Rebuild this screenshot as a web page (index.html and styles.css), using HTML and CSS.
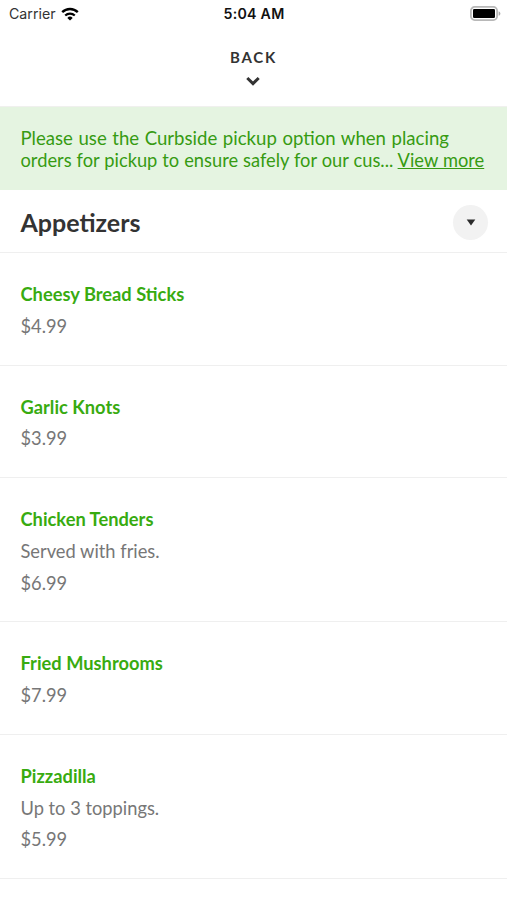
FILE: index.html
```
<!DOCTYPE html>
<html lang="en">
<head>
    <meta charset="UTF-8" />
    <meta name="viewport" content="width=device-width, initial-scale=1.0"/>
    <title>Appetizers | Menu</title>
    <link rel="stylesheet" href="styles.css">
</head>
<body>
<div class="status-bar">
    <div class="carrier">
        <span>Carrier</span>
        <svg class="wifi" viewBox="0 0 18 14" width="18" height="14">
            <path d="M1.2 5.2a11.2 11.2 0 0 1 15.6 0" fill="none" stroke="#000" stroke-width="2.4"/>
            <path d="M4.2 8.5a7 7 0 0 1 9.6 0" fill="none" stroke="#000" stroke-width="2.2"/>
            <path d="M9 13.6L6.3 10.9a3.9 3.9 0 0 1 5.4 0z" fill="#000"/>
        </svg>
    </div>
    <div class="time">5:04 AM</div>
    <svg class="battery" viewBox="0 0 31 15" width="31" height="15">
        <rect x=".9" y=".9" width="26.2" height="13.2" rx="3.8" fill="#fff" stroke="#b8b8b8" stroke-width="1.8"/>
        <rect x="3" y="3" width="22" height="9" rx="1.2" fill="#000"/>
        <path d="M28.6 5.2c2.4 1 2.4 3.6 0 4.6z" fill="#aaa"/>
    </svg>
</div>

<header class="nav">
    <a href="#" class="back">Back</a>
    <svg class="chevron" viewBox="0 0 14 10" width="14" height="10">
        <path d="M1.3 2L7 7.6 12.7 2" fill="none" stroke="#333" stroke-width="3"/>
    </svg>
</header>

<div class="notice">
    <p class="lead">Please use the Curbside pickup option when placing</p>
    <p>orders for pickup to ensure safely for our cus... <a href="#">View more</a></p>
</div>

<div class="category">
    <h1>Appetizers</h1>
    <button class="toggle" aria-label="Choose category">
        <svg viewBox="0 0 10 7" width="10" height="7"><path d="M.7.5h8.6L5 6.5z" fill="#2b2b2b"/></svg>
    </button>
</div>

<ul class="menu">
    <li class="item">
        <h2>Cheesy Bread Sticks</h2>
        <p>$4.99</p>
    </li>
    <li class="item">
        <h2>Garlic Knots</h2>
        <p>$3.99</p>
    </li>
    <li class="item">
        <h2>Chicken Tenders</h2>
        <p>Served with fries.</p>
        <p>$6.99</p>
    </li>
    <li class="item">
        <h2>Fried Mushrooms</h2>
        <p>$7.99</p>
    </li>
    <li class="item">
        <h2>Pizzadilla</h2>
        <p>Up to 3 toppings.</p>
        <p>$5.99</p>
    </li>
</ul>
</body>
</html>
```
FILE: styles.css
```
* {
    margin: 0;
    padding: 0;
    box-sizing: border-box;
}

body {
    background-color: #fff;
    color: #333;
    font-family: Lato, sans-serif;
    font-size: 18.3px;
    overflow: hidden;
}

.status-bar {
    display: grid;
    grid-template-columns: 1fr auto 1fr;
    align-items: center;
    height: 27px;
    padding: 0 6px 0 9px;
    color: #111;
    font-family: Inter, sans-serif;
    font-size: 14.2px;
}

.carrier {
    display: flex;
    align-items: center;
    gap: 5.5px;
    color: #333;
}

.time {
    margin-right: 2px;
    font-weight: 600;
    letter-spacing: 0.25px;
}

.battery {
    justify-self: end;
}

.nav {
    display: flex;
    flex-direction: column;
    align-items: center;
    height: 80px;
    padding-top: 20px;
    border-bottom: 1px solid #f0f0ee;
}

.back {
    color: #333;
    font-size: 15px;
    font-weight: 700;
    line-height: 20px;
    letter-spacing: 1.8px;
    text-transform: uppercase;
    text-decoration: none;
}

.chevron {
    margin-top: 9px;
    margin-right: 1px;
}

.notice {
    height: 83px;
    padding: 20px 20.5px 0;
    background-color: #e5f4e1;
    color: #369b12;
    line-height: 22px;
    word-spacing: 0.3px;
    white-space: nowrap;
}

.notice .lead {
    font-size: 18.6px;
    word-spacing: 0.8px;
}

.notice a {
    color: inherit;
}

.category {
    display: flex;
    align-items: center;
    justify-content: space-between;
    height: 63.2px;
    padding: 2px 19px 0 20.5px;
    border-bottom: 1px solid #efefef;
}

.category h1 {
    font-size: 25px;
    font-weight: 700;
}

.toggle {
    display: flex;
    align-items: center;
    justify-content: center;
    width: 35px;
    height: 35px;
    border: none;
    border-radius: 50%;
    background-color: #f2f2f2;
}

.menu {
    list-style: none;
}

.item {
    padding: 26px 20.5px 22.1px;
    border-bottom: 1px solid #efefef;
    color: #777;
    line-height: 31.7px;
}

.item h2 {
    color: #38ab10;
    font-size: 18.3px;
    font-weight: 700;
}
```
